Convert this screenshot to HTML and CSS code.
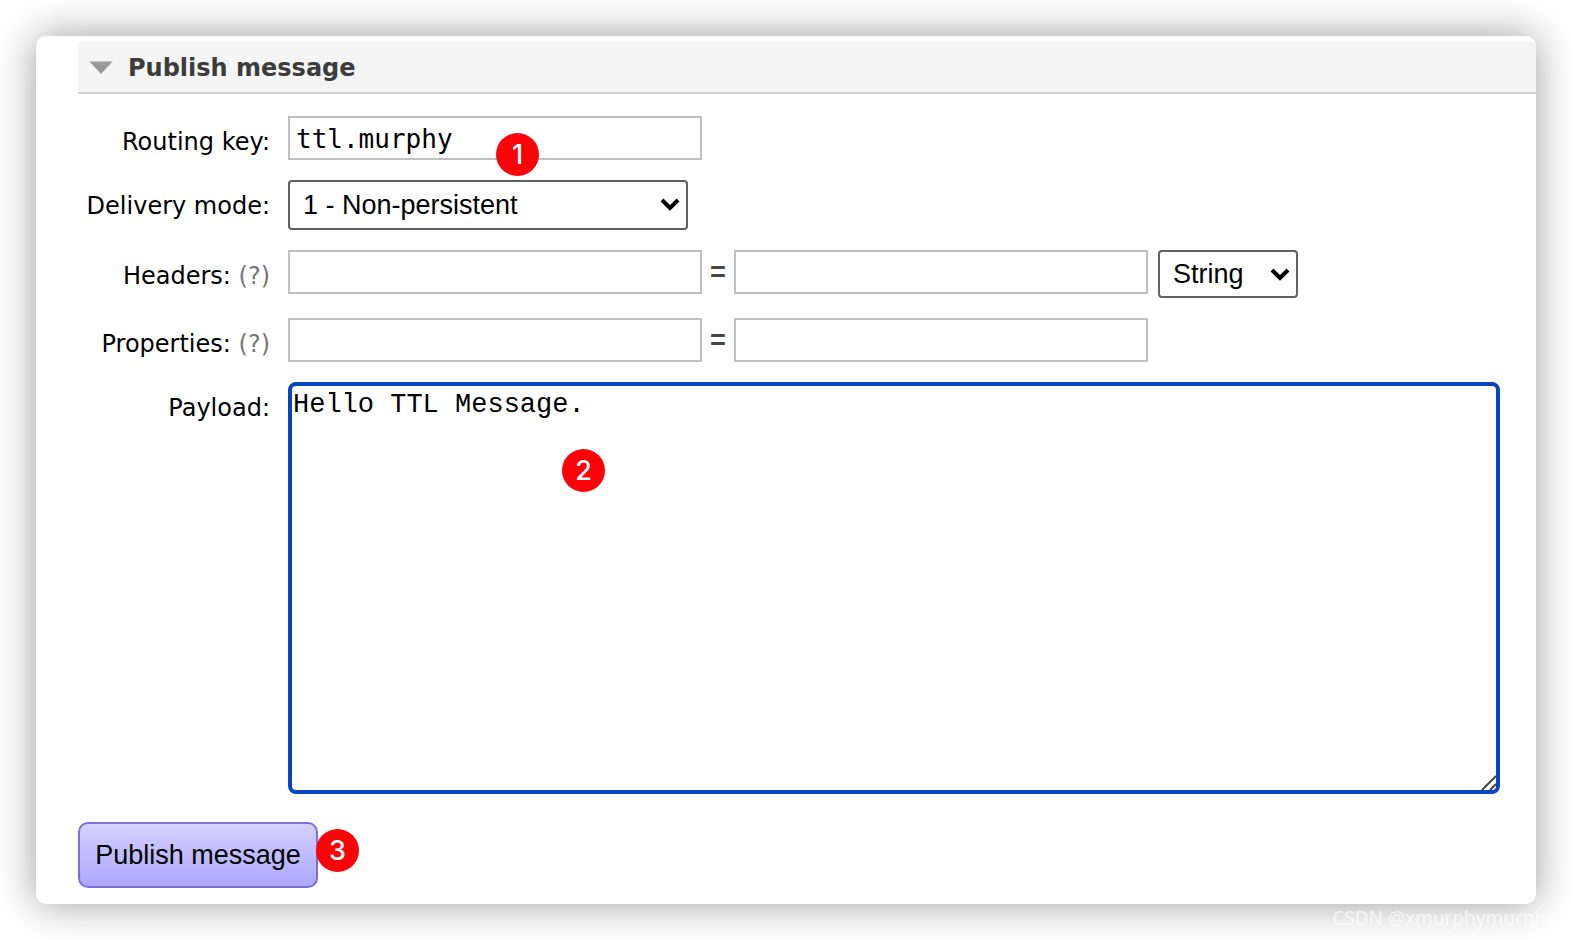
FILE: index.html
```html
<!DOCTYPE html>
<html lang="en">
<head>
    <meta charset="UTF-8">
    <meta name="viewport" content="width=device-width, initial-scale=1.0">
    <title>Publish message</title>
    <link rel="stylesheet" href="styles.css">
</head>
<body>
    <main class="card">
        <h2>
            <svg class="toggle" width="24" height="14" viewBox="0 0 24 14"><path d="M0.5 0.5H23.5L12 13Z"/></svg>
            Publish message
        </h2>

        <form>
            <div class="fields">
                <label for="routing-key">Routing key:</label>
                <div class="field">
                    <input type="text" id="routing-key" value="ttl.murphy">
                    <span class="badge badge-key">1</span>
                </div>

                <label for="delivery-mode">Delivery mode:</label>
                <div class="field">
                    <div class="select select-wide">
                        <select id="delivery-mode">
                            <option>1 - Non-persistent</option>
                            <option>2 - Persistent</option>
                        </select>
                        <svg width="20" height="14" viewBox="0 0 20 14"><path d="M2 3L10 11L18 3"/></svg>
                    </div>
                </div>

                <div class="label"><label for="header-key">Headers:</label> <a href="#headers">(?)</a></div>
                <div class="field">
                    <input type="text" id="header-key">
                    <span class="equals">=</span>
                    <input type="text" aria-label="Header value">
                    <div class="select select-type">
                        <select aria-label="Header type">
                            <option>String</option>
                            <option>Number</option>
                            <option>Boolean</option>
                        </select>
                        <svg width="20" height="14" viewBox="0 0 20 14"><path d="M2 3L10 11L18 3"/></svg>
                    </div>
                </div>

                <div class="label"><label for="property-key">Properties:</label> <a href="#properties">(?)</a></div>
                <div class="field">
                    <input type="text" id="property-key">
                    <span class="equals">=</span>
                    <input type="text" aria-label="Property value">
                </div>

                <label for="payload">Payload:</label>
                <div class="field">
                    <textarea id="payload">Hello TTL Message.</textarea>
                    <svg class="grip" width="16" height="16" viewBox="0 0 16 16"><path d="M1 15L15 1M9 15L15 9"/></svg>
                    <span class="badge badge-payload">2</span>
                </div>
            </div>

            <div class="actions">
                <button type="button">Publish message</button>
                <span class="badge badge-publish">3</span>
            </div>
        </form>
    </main>
    <div class="watermark">CSDN @xmurphymurphy</div>
</body>
</html>
```

FILE: styles.css
```css
* {
    box-sizing: border-box;
}
body {
    margin: 0;
    padding: 36px;
    position: relative;
    background-color: white;
    color: black;
    font-family: Verdana, "DejaVu Sans", sans-serif;
    font-size: 24px;
}
.card {
    padding: 6px 0 16px 42px;
    background-color: white;
    border-radius: 10px;
    box-shadow: 0 0 40px rgba(0, 0, 0, 0.4);
    overflow: hidden;
}
h2 {
    display: flex;
    align-items: center;
    gap: 15px;
    height: 52px;
    margin: 0 0 22px;
    padding: 2px 0 0 11px;
    background-color: #f5f5f5;
    border-bottom: 2px solid #d4d4d4;
    color: #3c3c3c;
    font-size: 24px;
}
.toggle {
    fill: #999;
}
.fields {
    display: grid;
    grid-template-columns: 192px minmax(0, 1fr);
    gap: 20px 18px;
    padding-right: 36px;
}
.fields > label, .label {
    height: 44px;
    line-height: 52px;
    text-align: right;
    white-space: nowrap;
}
.label a {
    color: #777;
    text-decoration: none;
}
.field {
    display: flex;
    align-items: flex-start;
    position: relative;
}
input {
    width: 414px;
    height: 44px;
    padding: 2px 6px 0;
    border: 2px solid #c0c0c0;
    background-color: white;
    color: black;
    font-family: "DejaVu Sans Mono", monospace;
    font-size: 26px;
}
.equals {
    width: 32px;
    line-height: 44px;
    text-align: center;
    color: #444;
    font-family: "Liberation Sans", Arial, sans-serif;
    font-size: 27px;
    font-weight: bold;
}
.select {
    position: relative;
}
.select svg {
    position: absolute;
    top: 17px;
    right: 8px;
    fill: none;
    stroke: black;
    stroke-width: 4;
    pointer-events: none;
}
select {
    display: block;
    width: 100%;
    height: 48px;
    padding: 0 13px;
    appearance: none;
    border: 2px solid #606060;
    border-radius: 4px;
    background-color: white;
    color: black;
    font-family: "Liberation Sans", Arial, sans-serif;
    font-size: 27px;
}
.select-wide {
    width: 400px;
}
.select-wide select {
    height: 50px;
}
.select-type {
    width: 140px;
    margin-left: 10px;
}
textarea {
    display: block;
    width: 100%;
    height: 412px;
    padding: 4px 1px;
    border: 4px solid #0546c0;
    border-radius: 8px;
    outline: none;
    resize: none;
    color: black;
    font-family: "Courier New", "Liberation Mono", monospace;
    font-size: 27px;
    line-height: 30px;
}
.grip {
    position: absolute;
    right: 3px;
    bottom: 3px;
    fill: none;
    stroke: #444;
    stroke-width: 2;
}
.actions {
    display: flex;
    position: relative;
    margin-top: 28px;
}
button {
    width: 240px;
    height: 66px;
    padding: 0;
    border: 2px solid #7a70d8;
    border-radius: 10px;
    background: linear-gradient(#d4d0ff, #aca8ff);
    color: black;
    font-family: "Liberation Sans", Arial, sans-serif;
    font-size: 27px;
}

/* numbered step markers */
.badge {
    position: absolute;
    width: 43px;
    height: 43px;
    border-radius: 50%;
    background-color: #ff0008;
    color: white;
    font-family: Inter, sans-serif;
    font-size: 27px;
    font-weight: 500;
    line-height: 43px;
    text-align: center;
}
.badge-key {
    top: 17px;
    left: 208px;
    z-index: 1;
}
.badge-payload {
    top: 67px;
    left: 274px;
}
.badge-publish {
    top: 7px;
    left: 238px;
}
.watermark {
    position: absolute;
    right: 16px;
    bottom: 9px;
    color: rgba(255, 255, 255, 0.7);
    font-family: "Noto Sans", sans-serif;
    font-size: 19px;
    line-height: 26px;
}
```
